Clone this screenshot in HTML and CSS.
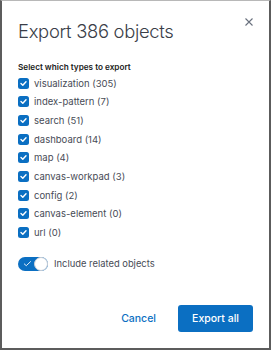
FILE: index.html
```html
<!DOCTYPE html>
<html>
<head>
<meta charset="utf-8">
<link rel="stylesheet" href="styles.css">
</head>
<body>
<div class="modal">
  <button class="close" aria-label="Close">
    <svg width="8" height="8" viewBox="0 0 8 8"><path d="M0.5 0.5L7.5 7.5M7.5 0.5L0.5 7.5" stroke="#69707d" stroke-width="1.1" fill="none"/></svg>
  </button>
  <h1 class="title">Export 386 objects</h1>
  <div class="label">Select which types to export</div>
  <ul class="checks">
    <li class="row"><span class="box"><svg viewBox="0 0 11 11" width="11" height="11"><path d="M3 5.6L4.8 7.3L8 3.8" stroke="#fff" stroke-width="1.4" fill="none" stroke-linecap="round" stroke-linejoin="round"/></svg></span>visualization (305)</li>
    <li class="row"><span class="box"><svg viewBox="0 0 11 11" width="11" height="11"><path d="M3 5.6L4.8 7.3L8 3.8" stroke="#fff" stroke-width="1.4" fill="none" stroke-linecap="round" stroke-linejoin="round"/></svg></span>index-pattern (7)</li>
    <li class="row"><span class="box"><svg viewBox="0 0 11 11" width="11" height="11"><path d="M3 5.6L4.8 7.3L8 3.8" stroke="#fff" stroke-width="1.4" fill="none" stroke-linecap="round" stroke-linejoin="round"/></svg></span>search (51)</li>
    <li class="row"><span class="box"><svg viewBox="0 0 11 11" width="11" height="11"><path d="M3 5.6L4.8 7.3L8 3.8" stroke="#fff" stroke-width="1.4" fill="none" stroke-linecap="round" stroke-linejoin="round"/></svg></span>dashboard (14)</li>
    <li class="row"><span class="box"><svg viewBox="0 0 11 11" width="11" height="11"><path d="M3 5.6L4.8 7.3L8 3.8" stroke="#fff" stroke-width="1.4" fill="none" stroke-linecap="round" stroke-linejoin="round"/></svg></span>map (4)</li>
    <li class="row"><span class="box"><svg viewBox="0 0 11 11" width="11" height="11"><path d="M3 5.6L4.8 7.3L8 3.8" stroke="#fff" stroke-width="1.4" fill="none" stroke-linecap="round" stroke-linejoin="round"/></svg></span>canvas-workpad (3)</li>
    <li class="row"><span class="box"><svg viewBox="0 0 11 11" width="11" height="11"><path d="M3 5.6L4.8 7.3L8 3.8" stroke="#fff" stroke-width="1.4" fill="none" stroke-linecap="round" stroke-linejoin="round"/></svg></span>config (2)</li>
    <li class="row"><span class="box"><svg viewBox="0 0 11 11" width="11" height="11"><path d="M3 5.6L4.8 7.3L8 3.8" stroke="#fff" stroke-width="1.4" fill="none" stroke-linecap="round" stroke-linejoin="round"/></svg></span>canvas-element (0)</li>
    <li class="row"><span class="box"><svg viewBox="0 0 11 11" width="11" height="11"><path d="M3 5.6L4.8 7.3L8 3.8" stroke="#fff" stroke-width="1.4" fill="none" stroke-linecap="round" stroke-linejoin="round"/></svg></span>url (0)</li>
  </ul>
  <div class="toggle-row">
    <span class="switch">
      <svg class="tick" viewBox="0 0 10 8" width="9" height="7"><path d="M1 4.2L3.6 6.5L8.8 1.5" stroke="#fff" stroke-width="1" fill="none"/></svg>
      <span class="knob"></span>
    </span>
    <span class="toggle-label">Include related objects</span>
  </div>
  <div class="footer">
    <button class="btn-empty">Cancel</button>
    <button class="btn-fill">Export all</button>
  </div>
</div>
</body>
</html>
```
FILE: styles.css
```css
html, body {
  margin: 0;
  padding: 0;
  background: #fff;
}
.modal {
  position: relative;
  width: 271px;
  height: 350px;
  box-sizing: border-box;
  border-left: 2px solid #5c5c5c;
  border-right: 2px solid #5c5c5c;
  border-bottom: 2px solid #5c5c5c;
  border-top: 1px solid #b8b8b8;
  padding: 17px 16px 0 16px;
  font-family: Inter, "Noto Sans", sans-serif;
  color: #343741;
  display: flex;
  flex-direction: column;
}
.close {
  position: absolute;
  top: 17px;
  right: 16px;
  width: 8px;
  height: 8px;
  padding: 0;
  border: 0;
  background: none;
  display: block;
}
.close svg { display: block; }
.title {
  margin: 0;
  font-size: 18.4px;
  line-height: 27px;
  font-weight: 300;
  letter-spacing: -0.3px;
  color: #3a3e48;
}
.label {
  margin-top: 16px;
  font-size: 8.2px;
  line-height: 12px;
  font-weight: 600;
  color: #1a1c21;
}
.checks {
  list-style: none;
  margin: 1px 0 0;
  padding: 0;
}
.row {
  display: flex;
  align-items: center;
  height: 18.65px;
  font-size: 9.5px;
  color: #474b56;
}
.box {
  width: 11px;
  height: 11px;
  border-radius: 2.5px;
  background: #0b6fc2;
  margin-right: 5px;
  flex: none;
  display: block;
}
.box svg { display: block; }
.toggle-row {
  display: flex;
  align-items: center;
  margin-top: 15px;
  height: 14px;
}
.switch {
  position: relative;
  width: 30px;
  height: 14px;
  border-radius: 7px;
  background: #0b6fc2;
  flex: none;
  margin-right: 6px;
}
.tick {
  position: absolute;
  left: 5px;
  top: 3.5px;
}
.knob {
  position: absolute;
  right: 0;
  top: 0;
  width: 14px;
  height: 14px;
  box-sizing: border-box;
  border-radius: 50%;
  background: #fff;
  border: 1px solid #c9ced6;
}
.toggle-label {
  font-size: 9.4px;
  color: #474b56;
}
.footer {
  display: flex;
  justify-content: flex-end;
  align-items: center;
  margin-top: auto;
  margin-bottom: 16px;
  gap: 14px;
}
.btn-empty {
  border: 0;
  background: none;
  font-family: Inter, "Noto Sans", sans-serif;
  font-size: 10.5px;
  font-weight: 500;
  color: #0b6fc2;
  padding: 0 8px;
  height: 27px;
}
.btn-fill {
  border: 0;
  border-radius: 3px;
  background: #0b6fc2;
  color: #fff;
  font-family: Inter, "Noto Sans", sans-serif;
  font-size: 10.5px;
  font-weight: 500;
  height: 27px;
  width: 75px;
  padding: 0;
}
```
